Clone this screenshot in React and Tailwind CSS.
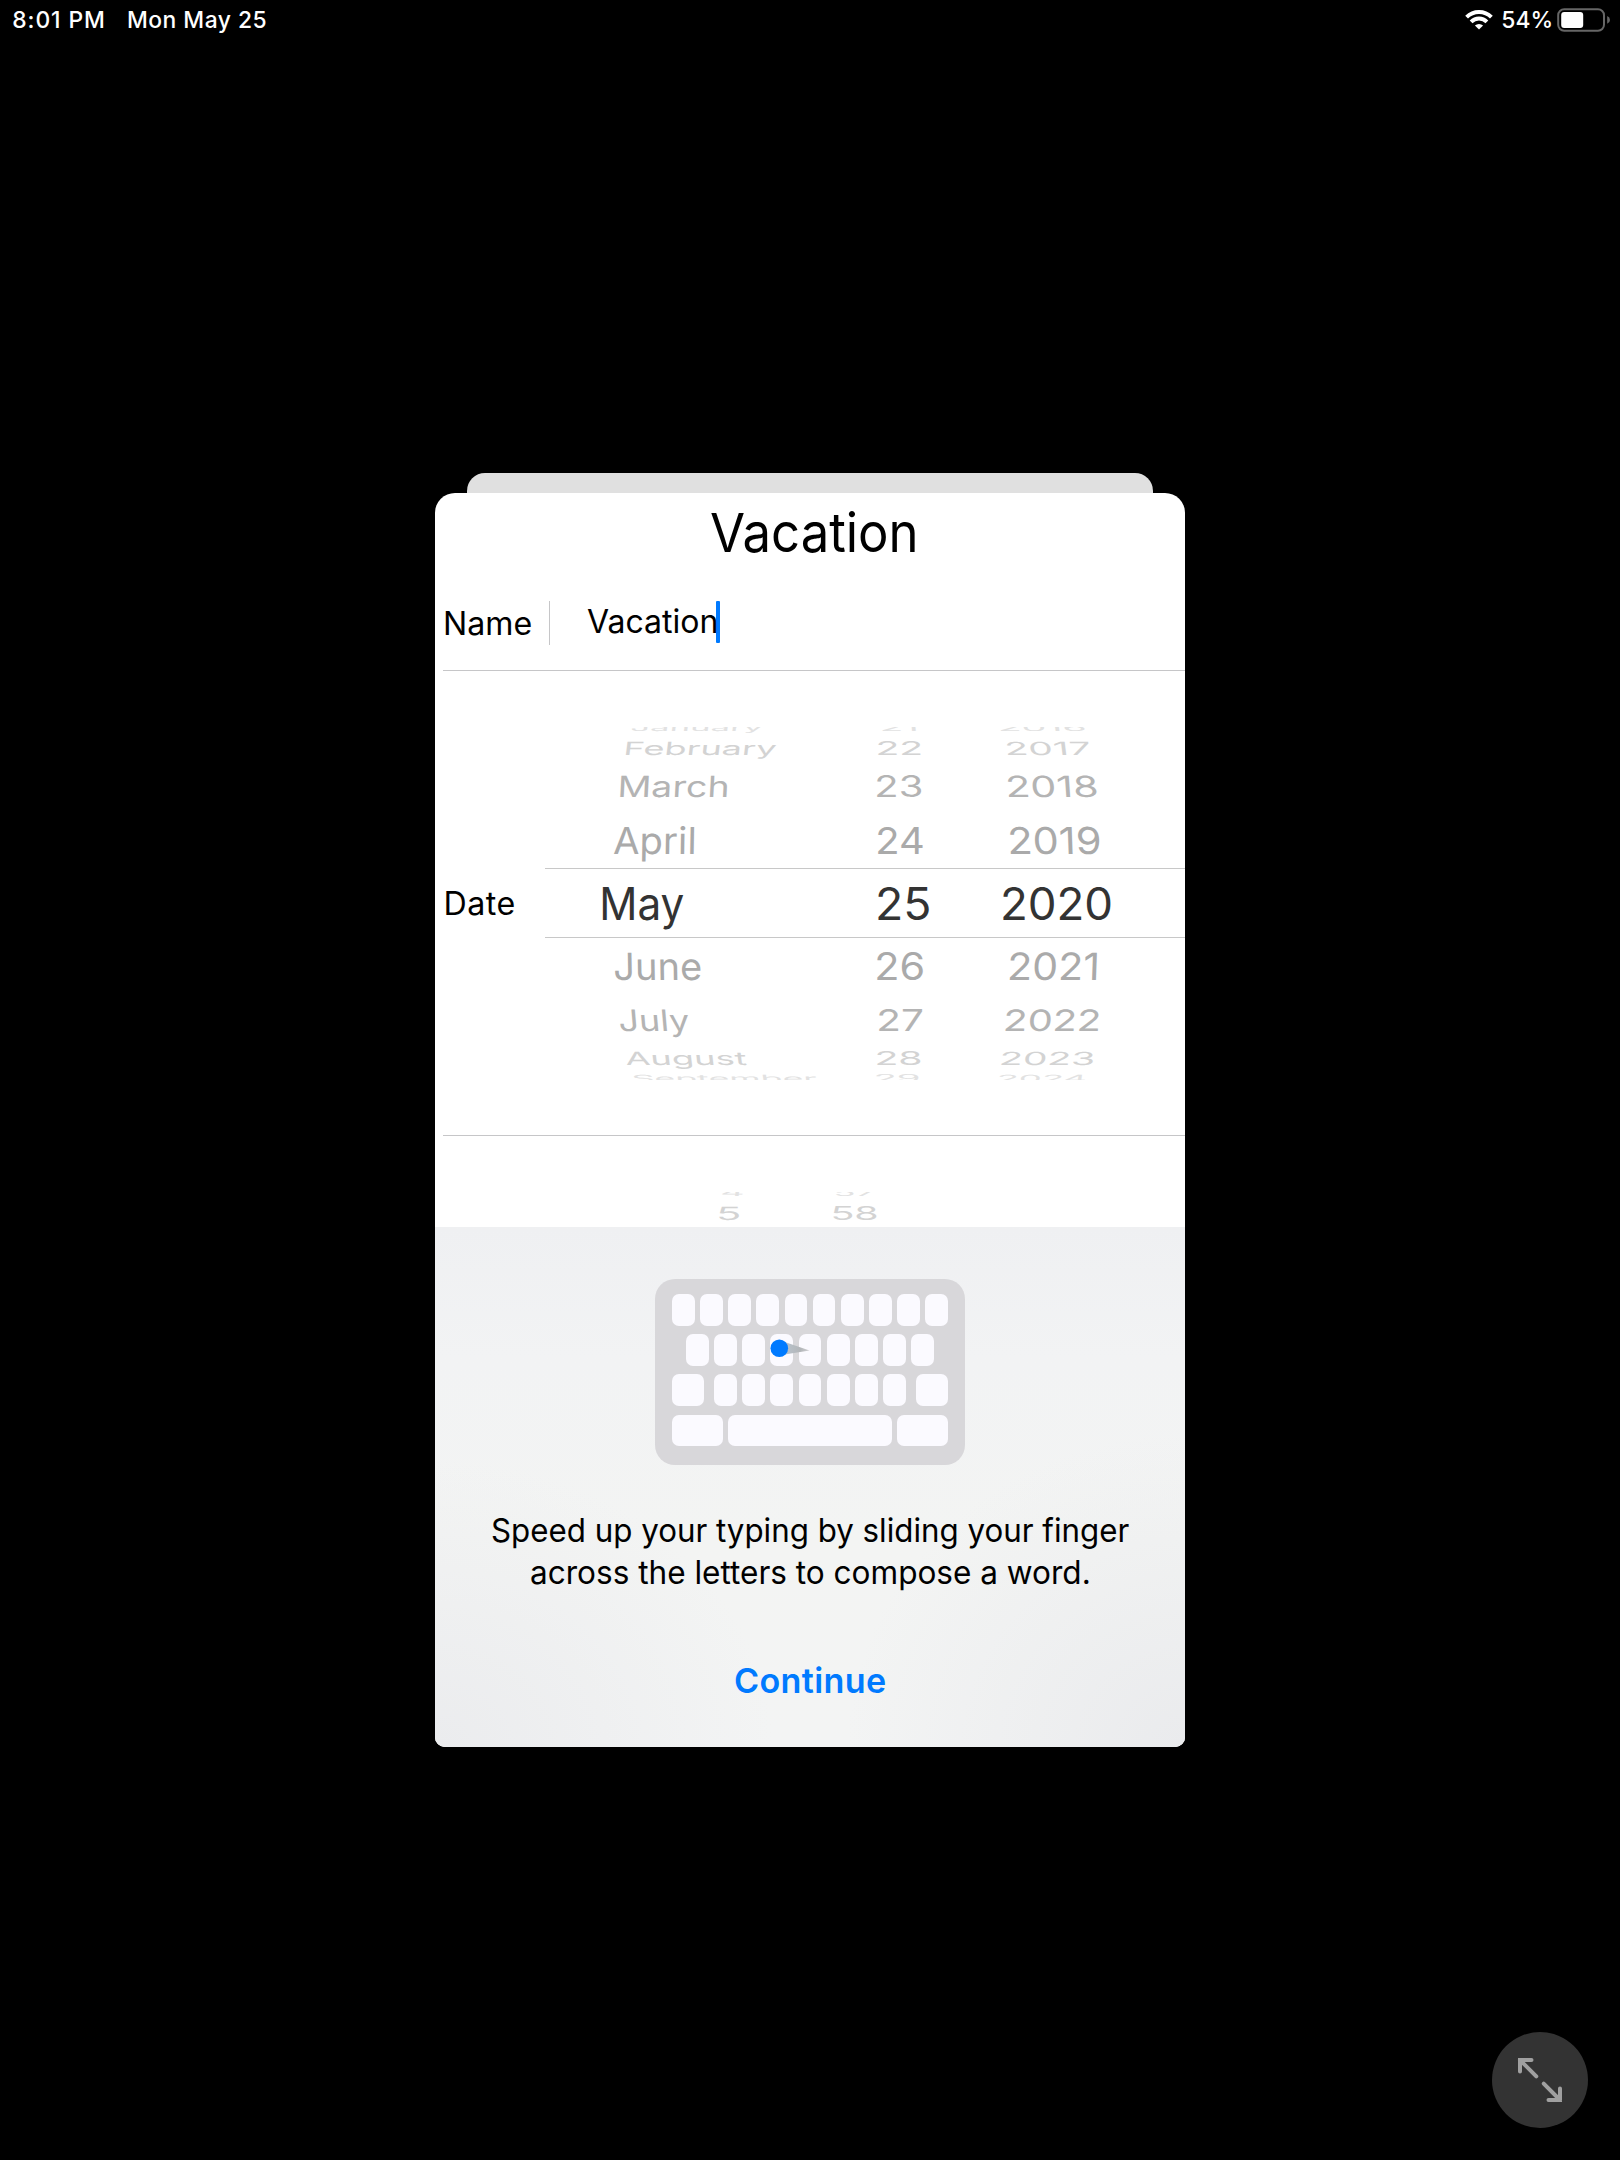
import React from "react";

const FAMILY = 'Inter, "Liberation Sans", sans-serif';
const CAP = 0.727;
const CAP_TOP = 0.1365;

const ctx = document.createElement("canvas").getContext("2d");

function inkOf(text, size, weight) {
  ctx.font = `${weight} ${size}px ${FAMILY}`;
  const m = ctx.measureText(text);
  return { left: -m.actualBoundingBoxLeft, right: m.actualBoundingBoxRight };
}

// A line of text whose box runs from cap height to baseline.
// Short lines are tracked out to the width, long ones are condensed to it.
function Line({ text, w, h, weight = 400, className = "" }) {
  const size = h / CAP;
  const ink = inkOf(text, size, weight);
  const natural = ink.right - ink.left;
  const condensed = natural > w;
  const sx = condensed ? w / natural : 1;
  const tracking = condensed ? 0 : (w - natural) / (text.length - 1);
  return (
    <div className={"shrink-0 " + className} style={{ width: w, height: h }}>
      <span
        className="block w-max origin-top-left whitespace-pre leading-none"
        style={{
          fontSize: size,
          fontWeight: weight,
          letterSpacing: tracking,
          transform: `scaleX(${sx}) translate(${-ink.left}px, ${-CAP_TOP}em)`,
        }}
      >
        {text}
      </span>
    </div>
  );
}

// A wheel label, flattened and slanted by its place on the drum.
function WheelItem({ text, w, h, x, gap, color, skew = 0 }) {
  const size = 45;
  const ink = inkOf(text, size, 400);
  const sx = w / (ink.right - ink.left);
  const sy = h / (size * CAP);
  return (
    <div className="shrink-0" style={{ width: w, height: h, marginLeft: x, marginTop: gap }}>
      <span
        className="block w-max origin-top-left whitespace-pre text-[45px] leading-none"
        style={{
          color,
          transform: `translateY(${h / 2}px) skewX(${skew}deg) translateY(${-h / 2}px) scale(${sx}, ${sy}) translate(${-ink.left}px, ${-size * CAP_TOP}px)`,
        }}
      >
        {text}
      </span>
    </div>
  );
}

const COLORS = ["#e2e2e2", "#d3d3d3", "#b4b4b4", "#aaaaaa", "#333333", "#aaaaaa", "#b4b4b4", "#d3d3d3", "#e2e2e2"];
const TOPS = [-3.2, 14.8, 48.9, 100, 160.3, 225.7, 282.8, 324.9, 348.2];
const HEIGHTS = [7.2, 13.2, 21.2, 27, 32.4, 27.3, 21.4, 13.2, 7.2];

function WheelColumn({ left, items }) {
  return (
    <div className="flex w-0 shrink-0 flex-col">
      {items.map(([text, from, to, skew], i) => (
        <WheelItem
          key={text}
          text={text}
          x={from - left}
          w={to - from}
          h={HEIGHTS[i]}
          gap={TOPS[i] - (i ? TOPS[i - 1] + HEIGHTS[i - 1] : 0)}
          color={COLORS[i]}
          skew={skew}
        />
      ))}
    </div>
  );
}

const MONTHS = [
  ["January", 632, 763, -8], ["February", 625.5, 776, -7], ["March", 619.5, 727, -3], ["April", 613.8, 694, -1],
  ["May", 602, 684, 0], ["June", 615, 701, 1], ["July", 620, 689, 5], ["August", 626, 746, 7], ["September", 633, 816, 8],
];
const DAYS = [
  ["21", 882, 916, 4], ["22", 878.3, 921.3, 0], ["23", 877, 921.7, 0], ["24", 878, 923, 0],
  ["25", 878, 929, 0], ["26", 877.3, 923.7, 0], ["27", 878.7, 922.3, 0], ["28", 876.5, 920.5, 0], ["29", 876, 919, 0],
];
const YEARS = [
  ["2016", 1000, 1085, 8], ["2017", 1006.5, 1089, 7], ["2018", 1007.8, 1096.7, 4], ["2019", 1010, 1099.8, 2],
  ["2020", 1003, 1110.7, 0], ["2021", 1010.3, 1097.3, -2], ["2022", 1005.5, 1098.7, -4], ["2023", 1002, 1093.7, -7], ["2024", 999, 1085.5, -8],
];

const KEY = "h-[31.6px] w-[22.8px] rounded-[7px] bg-[#fbfaff]";

function Keys({ count }) {
  return Array.from({ length: count }, (_, i) => <span key={i} className={KEY} />);
}

function Keyboard() {
  return (
    <div className="relative flex h-[186px] w-[310px] flex-col gap-[8.6px] rounded-[20px] bg-[#d8d7da] px-[17px] pt-[15px]">
      <div className="flex justify-between"><Keys count={10} /></div>
      <div className="flex justify-between px-[14px]"><Keys count={9} /></div>
      <div className="flex justify-between">
        <span className="h-[31.6px] w-[32px] rounded-[7px] bg-[#fbfaff]" />
        <div className="flex gap-[5.4px]"><Keys count={7} /></div>
        <span className="h-[31.6px] w-[32px] rounded-[7px] bg-[#fbfaff]" />
      </div>
      <div className="flex gap-[5.3px]">
        <span className="h-[31.6px] w-[51px] rounded-[7px] bg-[#fbfaff]" />
        <span className="h-[31.6px] grow rounded-[7px] bg-[#fbfaff]" />
        <span className="h-[31.6px] w-[51px] rounded-[7px] bg-[#fbfaff]" />
      </div>
      <svg className="absolute left-[114px] top-[58px]" width="44" height="24" viewBox="0 0 44 24">
        <defs>
          <linearGradient id="trail" x1="0" x2="1">
            <stop offset="0.2" stopColor="#b9c3cc" />
            <stop offset="0.7" stopColor="#b3b6b9" />
            <stop offset="1" stopColor="#cfcfd2" />
          </linearGradient>
        </defs>
        <path d="M10 3 L40.5 13.4 L11 18.2 Z" fill="url(#trail)" />
        <circle cx="10.3" cy="11.3" r="8.8" fill="#007aff" />
      </svg>
    </div>
  );
}

function StatusBar() {
  return (
    <header className="flex h-[40px] shrink-0 text-white">
      <Line text="8:01 PM" w={90.8} h={16.6} weight={450} className="ml-[13.3px] mt-[12px]" />
      <Line text="Mon May 25" w={137.6} h={16.6} weight={450} className="ml-[23.8px] mt-[12px]" />
      <svg className="ml-auto mt-[9px]" width="28" height="21" viewBox="0 0 28 21">
        <g fill="none" stroke="white" strokeWidth="3.9">
          <path d="M1.6 8.2 A17.4 17.4 0 0 1 26.4 8.2" />
          <path d="M6.1 12.8 A11.1 11.1 0 0 1 21.9 12.8" />
        </g>
        <path d="M14 20.6 L9.9 16.6 A5.9 5.9 0 0 1 18.1 16.6 Z" fill="white" />
      </svg>
      <Line text="54%" w={49.4} h={16.6} weight={450} className="ml-[9.7px] mt-[12px]" />
      <svg className="ml-[5px] mr-[9.4px] mt-[8px]" width="54" height="24" viewBox="0 0 54 24">
        <rect x="1.2" y="1.2" width="45.8" height="21.6" rx="6" fill="none" stroke="#666" strokeWidth="2" />
        <rect x="4.2" y="4" width="22" height="16" rx="3" fill="white" />
        <path d="M50.2 8 Q53 9.3 53 11.9 Q53 14.5 50.2 15.8 Z" fill="#666" />
      </svg>
    </header>
  );
}

export default function App() {
  return (
    <div className="flex h-[2160px] w-[1620px] flex-col overflow-hidden bg-black font-['Inter','Liberation_Sans',sans-serif] text-black">
      <StatusBar />

      <div className="mx-auto mt-[433px] h-[20px] w-[686px] shrink-0 rounded-t-[18px] bg-[#e0e0e0]" />
      <main className="mx-auto flex h-[1254px] w-[750px] shrink-0 flex-col overflow-hidden rounded-t-[20px] rounded-b-[10px] bg-white">
        <h1 className="flex h-[108px] shrink-0">
          <Line text="Vacation" w={204} h={39.2} className="ml-[276.2px] mt-[20px]" />
        </h1>

        <section className="ml-[8px] flex h-[70px] shrink-0 border-b border-[#c6c6c8]">
          <Line text="Name" w={86.4} h={23.4} className="ml-[2px] mt-[10.5px]" />
          <div className="ml-[17.6px] h-[44px] w-px bg-[#c6c6c8]" />
          <Line text="Vacation" w={129.3} h={23.5} className="ml-[36.7px] mt-[8.5px]" />
          <div className="h-[42px] w-[4px] rounded-[1px] bg-[#007aff]" />
        </section>

        <section className="ml-[8px] flex h-[465px] shrink-0 border-b border-[#c6c6c8]">
          <Line text="Date" w={69} h={23.4} className="ml-[2.5px] mt-[220.5px]" />
          <div className="relative ml-[30.5px] mt-[56px] h-[353px] grow">
            <div className="flex h-full overflow-hidden">
              <WheelColumn left={545} items={MONTHS} />
              <WheelColumn left={545} items={DAYS} />
              <WheelColumn left={545} items={YEARS} />
            </div>
            <div className="absolute inset-x-0 top-[141px] h-[70px] border-y border-[#c8c8c8]" />
          </div>
        </section>

        <section className="flex h-[91px] shrink-0 pt-[56px]">
          <div className="flex h-[35px] w-full overflow-hidden">
            <WheelColumn left={435} items={[["4", 722, 743, -6], ["5", 719.3, 739.5, -2]]} />
            <WheelColumn left={435} items={[["57", 836, 875, -6], ["58", 833, 877, 0]]} />
          </div>
        </section>

        <section className="flex h-[520px] shrink-0 flex-col items-center bg-[radial-gradient(ellipse_45%_60%_at_100%_100%,#eaebed_0%,#eaebed00_100%),radial-gradient(ellipse_45%_55%_at_0%_100%,#ebecee_0%,#ebecee00_100%),linear-gradient(to_bottom,#eff0f2_0%,#f2f3f4_25%,#f3f4f3_60%,#f3f4f4_100%)] pt-[52px]">
          <Keyboard />
          <Line text="Speed up your typing by sliding your finger" w={637} h={23.5} className="mt-[53.5px]" />
          <Line text="across the letters to compose a word." w={557.5} h={23.5} className="mt-[18.5px]" />
          <button className="mt-[84.7px] flex text-[#007aff]">
            <Line text="Continue" w={150} h={24.8} weight={600} className="text-left" />
          </button>
        </section>
      </main>

      <button className="ml-auto mr-[32px] mt-auto mb-[32px] size-[96px] shrink-0 rounded-full bg-[#333]">
        <svg width="96" height="96" viewBox="0 0 96 96" fill="none" stroke="#a0a0a0" strokeWidth="4" strokeLinecap="round" strokeLinejoin="miter">
          <path d="M28 39.5 V28 H39.5 M28 28 L44.3 44.3" />
          <path d="M68 56.5 V68 H56.5 M68 68 L51.7 51.7" />
        </svg>
      </button>
    </div>
  );
}
